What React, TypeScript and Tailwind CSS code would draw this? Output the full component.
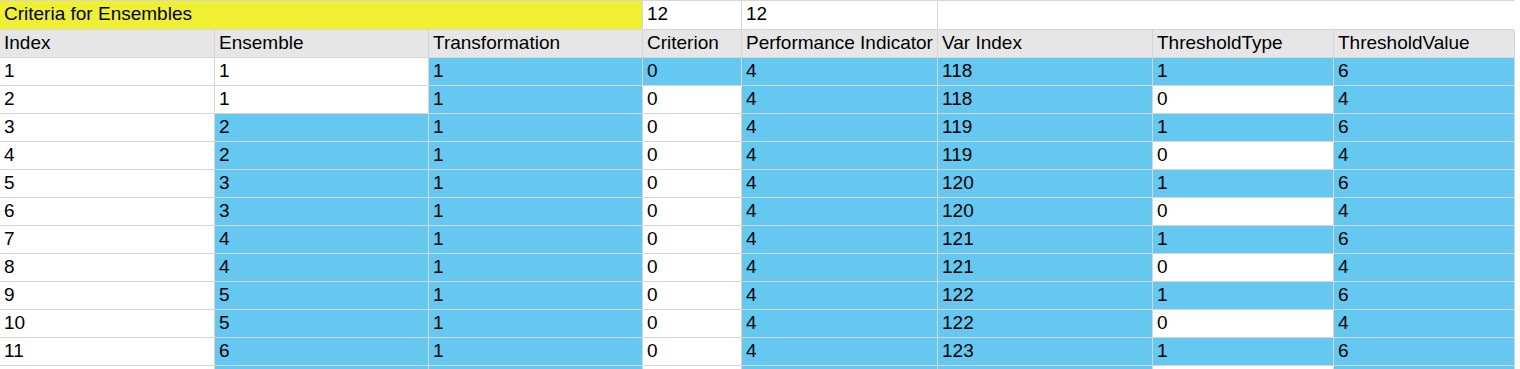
import React from "react";

const BLUE = "bg-[#64c8f0]";

const widths = ["w-[215px]", "w-[214px]", "w-[214px]", "w-[99px]", "w-[196px]", "w-[215px]", "w-[181px]", "w-[181px]"];

const headers = [
	"Index",
	"Ensemble",
	"Transformation",
	"Criterion",
	"Performance Indicator",
	"Var Index",
	"ThresholdType",
	"ThresholdValue",
];

interface Row {
	values: (string | number)[];
	blue: boolean[];
}

// row 12 is only a few pixels tall at the bottom edge, so it gets no text
const rows: Row[] = Array.from({ length: 12 }, (_, k) => {
	const i = k + 1;
	const ens = Math.ceil(i / 2);
	const odd = i % 2 === 1;
	const values = i < 12 ? [i, ens, 1, 0, 4, 117 + ens, odd ? 1 : 0, odd ? 6 : 4] : Array(8).fill("");
	return {
		values,
		blue: [false, i >= 3, true, i === 1, true, true, odd, true],
	};
});

const Cell: React.FC<{ w: string; bg?: string; children?: React.ReactNode }> = ({ w, bg = "bg-white", children }) => (
	<div className={`${w} ${bg} shrink-0 h-full border-r border-b border-[#d6d6d6] pl-[4px] leading-[25px] whitespace-nowrap overflow-hidden`}>
		{children}
	</div>
);

export default function App() {
	return (
		<div className="w-[1520px] h-[369px] overflow-hidden bg-white text-black text-[19px] font-['Liberation_Sans',Arial,sans-serif]">
			<div className="w-[1514px] border-t border-[#d6d6d6]">
				<div className="flex h-[29px]">
					<Cell w="w-[643px]" bg="bg-[#f0f032]">
						Criteria for Ensembles
					</Cell>
					<Cell w="w-[99px]">12</Cell>
					<Cell w="w-[196px]">12</Cell>
					<div className="flex-1 h-full border-b border-[#d6d6d6]" />
				</div>
				<div className="flex h-[28px]">
					{headers.map((h, j) => (
						<Cell key={h} w={widths[j]} bg="bg-[#e6e6e6]">
							{h}
						</Cell>
					))}
				</div>
				{rows.map((r, k) => (
					<div key={k} className="flex h-[28px]">
						{r.values.map((v, j) => (
							<Cell key={j} w={widths[j]} bg={r.blue[j] ? BLUE : "bg-white"}>
								{v}
							</Cell>
						))}
					</div>
				))}
			</div>
		</div>
	);
}
